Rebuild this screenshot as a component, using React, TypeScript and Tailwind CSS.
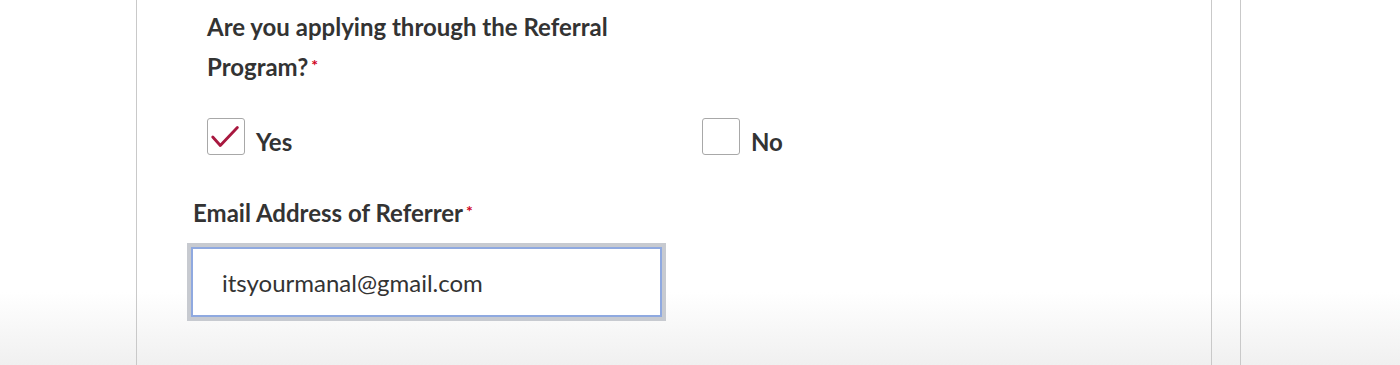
import React from 'react';

const font = { fontFamily: 'Lato, "Open Sans", sans-serif' };

const Star = () => (
  <span className="relative -top-[5px] ml-[3px] text-[16px] font-bold leading-none text-[#d0021b]">*</span>
);

const Box: React.FC<{ checked?: boolean }> = ({ checked }) => (
  <span className="flex h-[37px] w-[38px] shrink-0 items-center justify-center rounded-[3px] border border-[#a8a8a8] bg-white">
    {checked && (
      <svg width="38" height="37" viewBox="0 0 38 37" fill="none">
        <path
          d="M5 19 L13 28 L31 9"
          stroke="#a8183f"
          strokeWidth="3"
          strokeLinecap="round"
          strokeLinejoin="round"
        />
      </svg>
    )}
  </span>
);

const Option: React.FC<{ label: string; checked?: boolean }> = ({ label, checked }) => (
  <label className="flex items-center gap-[11px]">
    <Box checked={checked} />
    <span className="pt-[10px] text-[24px] font-bold leading-none text-[#333333]">{label}</span>
  </label>
);

export default function App() {
  return (
    <div
      style={font}
      className="flex h-[365px] w-[1400px] overflow-hidden bg-[linear-gradient(to_bottom,#ffffff_0%,#ffffff_80%,#f0f0f0_100%)]"
    >
      <div className="w-[136px] shrink-0" />
      <main className="w-[1076px] shrink-0 border-x border-[#c9c9c9] pl-[56px]">
        <div className="pl-[14px]">
          <h2 className="w-[430px] pt-[7px] text-[24px] font-bold leading-[40px] text-[#333333]">
            Are you applying through the Referral Program?
            <Star />
          </h2>
          <div className="mt-[31px] grid grid-cols-[495px_1fr]">
            <Option label="Yes" checked />
            <Option label="No" />
          </div>
        </div>
        <div className="mt-[45px] text-[24px] font-bold leading-[26px] text-[#333333]">
          Email Address of Referrer
          <Star />
        </div>
        <div className="ml-[-2px] mt-[21px] w-[471px]">
          <input
            type="text"
            defaultValue="itsyourmanal@gmail.com"
            style={font}
            className="h-[70px] w-full border-2 border-[#8fa9e0] bg-white pl-[29px] text-[24px] text-[#333333] shadow-[0_0_0_4px_#c7cad0] outline-none"
          />
        </div>
      </main>
      <div className="w-[28px] shrink-0" />
      <div className="flex-1 border-l border-[#c9c9c9]" />
    </div>
  );
}
